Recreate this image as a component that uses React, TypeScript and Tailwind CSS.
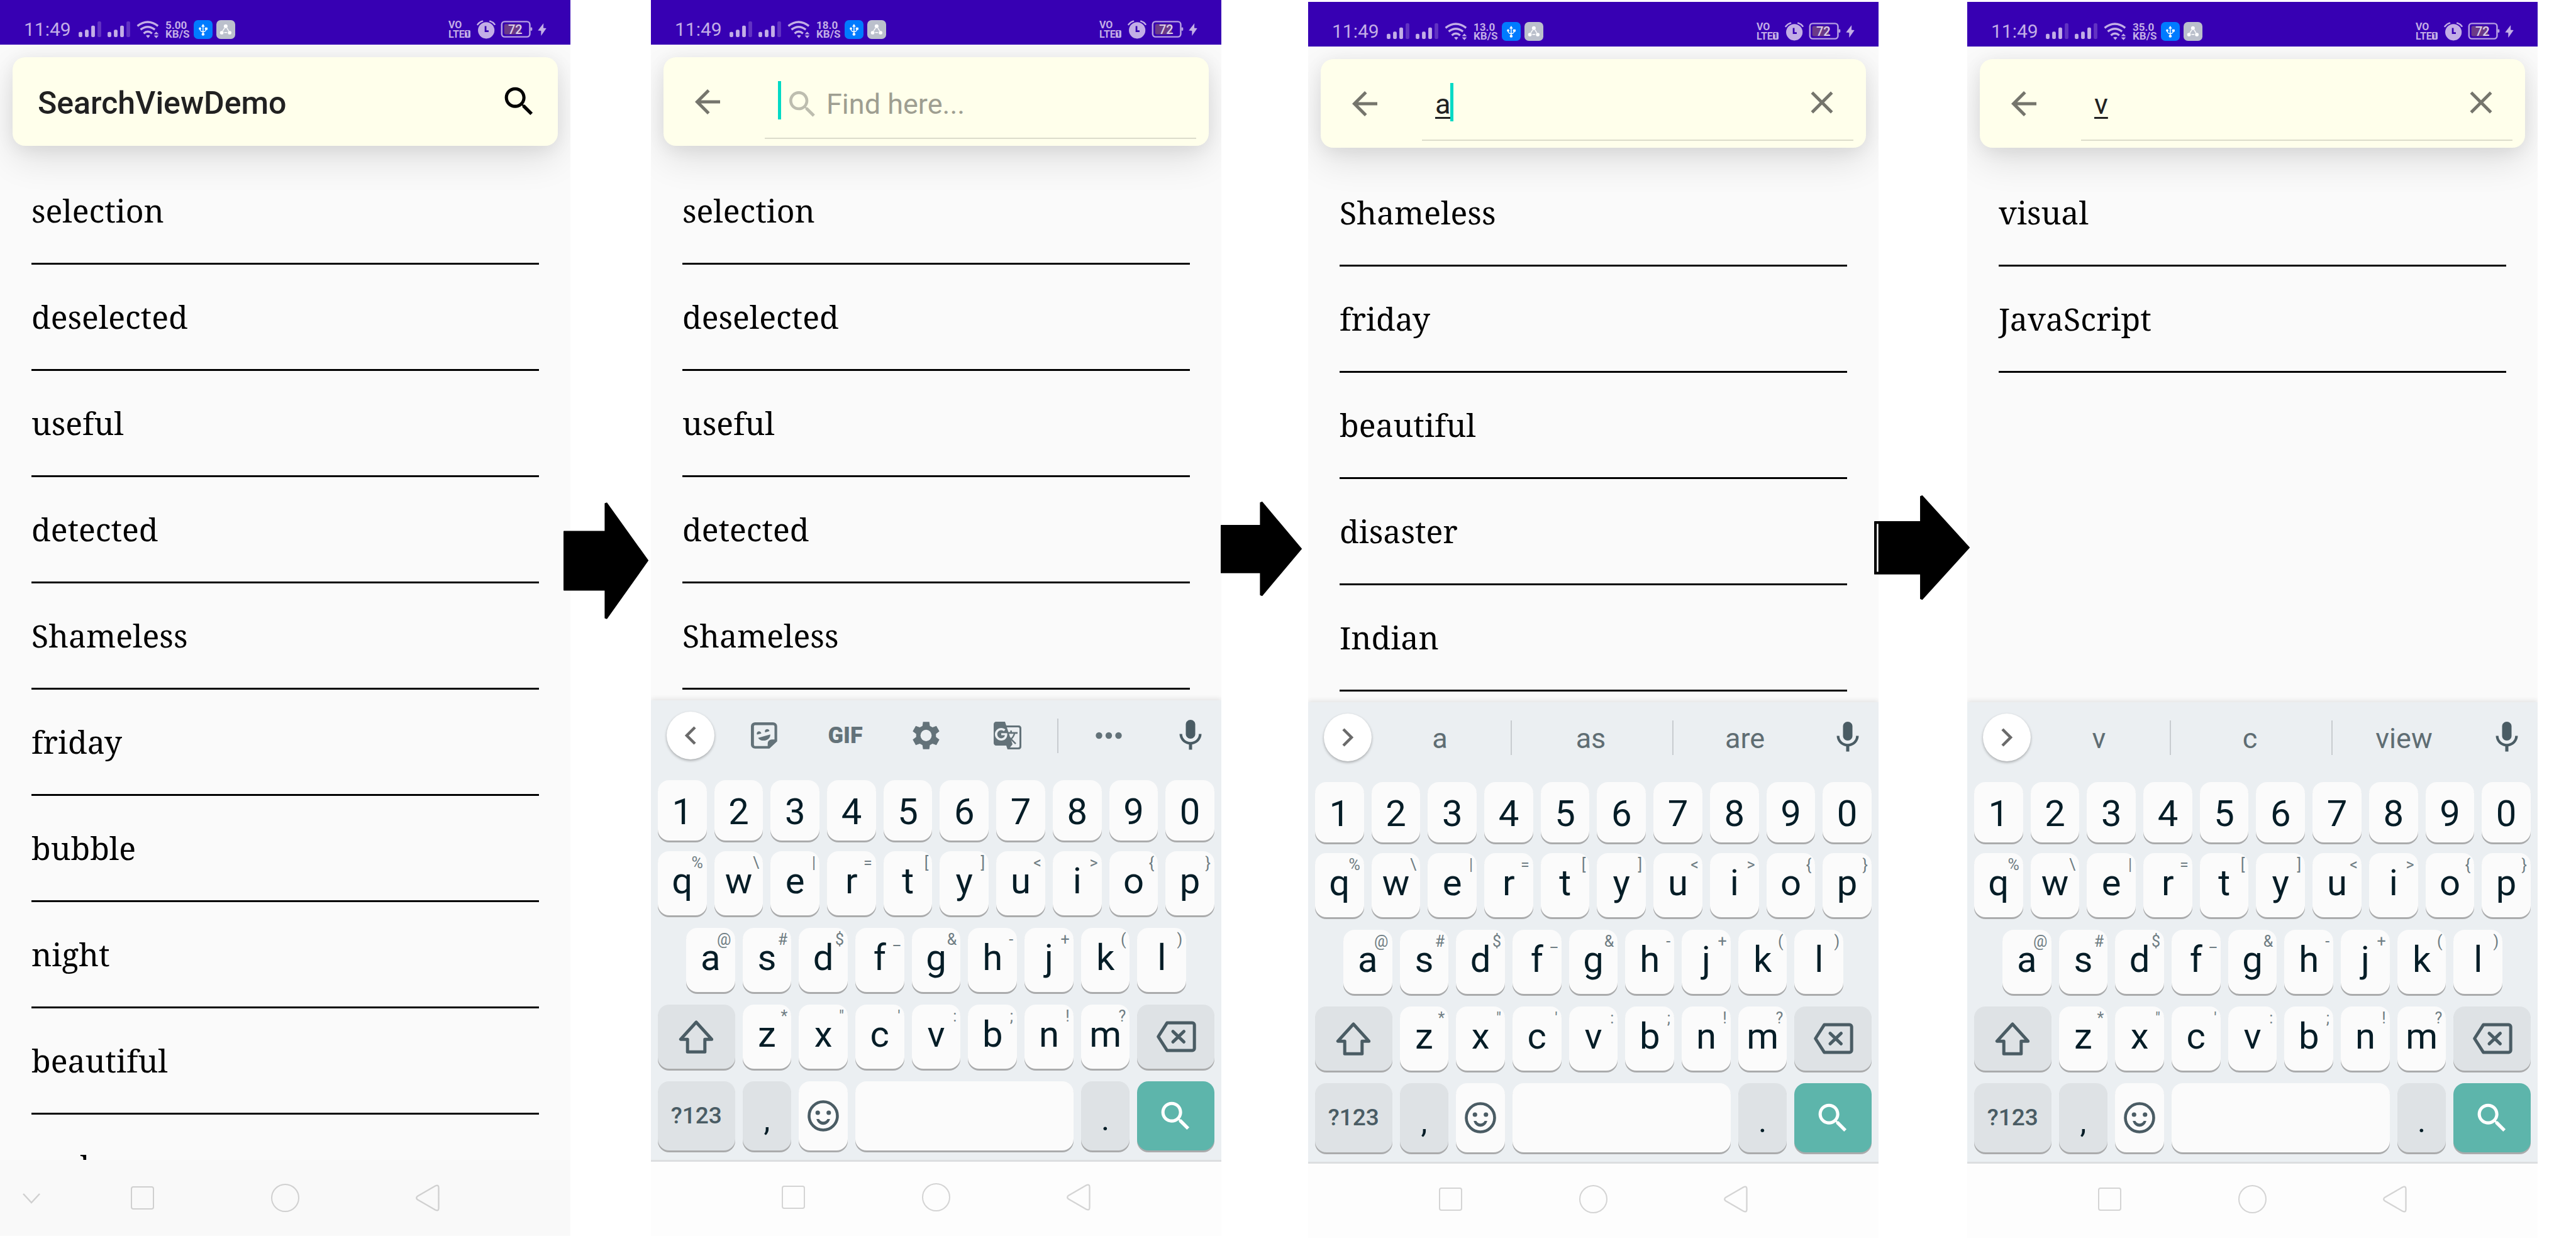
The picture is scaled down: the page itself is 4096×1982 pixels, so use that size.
import type { ReactNode } from "react";
import { MdGTranslate } from "react-icons/md";

/* ---------- icons ---------- */

function SearchIcon({ className }: { className: string }) {
  return (
    <svg viewBox="0 0 24 24" fill="currentColor" className={className} aria-hidden="true">
      <path d="M15.5 14h-.79l-.28-.27C15.41 12.59 16 11.11 16 9.5 16 5.91 13.09 3 9.5 3S3 5.91 3 9.5 5.91 16 9.5 16c1.61 0 3.09-.59 4.23-1.57l.27.28v.79l5 4.99L20.49 19l-4.99-5zm-6 0C7.01 14 5 11.99 5 9.5S7.01 5 9.5 5 14 7.01 14 9.5 11.99 14 9.5 14z" />
    </svg>
  );
}

function BackIcon() {
  return (
    <svg viewBox="0 0 24 24" fill="currentColor" className="size-[60px]" aria-hidden="true">
      <path d="M20 11H7.83l5.59-5.59L12 4l-8 8 8 8 1.41-1.41L7.83 13H20v-2z" />
    </svg>
  );
}

function CloseIcon() {
  return (
    <svg viewBox="0 0 24 24" fill="currentColor" className="size-[60px]" aria-hidden="true">
      <path d="M19 6.41L17.59 5 12 10.59 6.41 5 5 6.41 10.59 12 5 17.59 6.41 19 12 13.41 17.59 19 19 17.59 13.41 12z" />
    </svg>
  );
}

function MicIcon() {
  return (
    <svg viewBox="0 0 24 24" fill="currentColor" className="size-[60px]" aria-hidden="true">
      <path d="M12 14c1.66 0 3-1.34 3-3V5c0-1.66-1.34-3-3-3S9 3.34 9 5v6c0 1.66 1.34 3 3 3z" />
      <path d="M17.3 11c0 3-2.54 5.1-5.3 5.1S6.7 14 6.7 11H5c0 3.41 2.72 6.23 6 6.72V21h2v-3.28c3.28-.48 6-3.3 6-6.72h-1.7z" />
    </svg>
  );
}

function StickerIcon() {
  return (
    <svg viewBox="59 66 140 150" preserveAspectRatio="none" fill="currentColor" className="h-[42px] w-[42px]" aria-hidden="true">
      <path
        fillRule="evenodd"
        d="M81 66H176A22 22 0 0 1 198 88V174L157 215H81A22 22 0 0 1 59 193V88A22 22 0 0 1 81 66ZM83 82H177A7 7 0 0 1 184 89V163H170A22 22 0 0 0 148 185V201H83A7 7 0 0 1 75 194V89A7 7 0 0 1 83 82Z"
      />
      <path d="M92 136A12 12 0 1 1 114 129Z" />
      <path d="M135 123A12 12 0 1 1 157 116Z" />
      <path d="M97 154L162 135C162 160 142 170 127 170C112 170 102 163 97 154Z" />
    </svg>
  );
}

function GearIcon() {
  return (
    <svg viewBox="917 68 142 156" preserveAspectRatio="none" fill="currentColor" className="h-[44px] w-[43px]" aria-hidden="true">
      <path
        fillRule="evenodd"
        d="M972 69H1005L1008 92L1022 100L1042 92L1058 122L1040 137V154L1058 169L1042 200L1022 192L1008 200L1005 223H972L969 200L955 192L934 200L918 169L936 154V137L918 122L934 92L955 100L969 92ZM988 113A29 32 0 1 0 988 178A29 32 0 1 0 988 113Z"
      />
    </svg>
  );
}

function DotsIcon() {
  return (
    <svg viewBox="0 0 42 12" fill="currentColor" className="h-[12px] w-[42px]" aria-hidden="true">
      <circle cx="5.5" cy="6" r="5.2" />
      <circle cx="21" cy="6" r="5.2" />
      <circle cx="36.5" cy="6" r="5.2" />
    </svg>
  );
}

function ChevronIcon({ direction }: { direction: "left" | "right" }) {
  return (
    <svg viewBox="0 0 20 30" fill="none" stroke="currentColor" strokeWidth="4.5" className="h-[30px] w-[20px]" aria-hidden="true">
      <path d={direction === "left" ? "M17 2L4 15L17 28" : "M3 2L16 15L3 28"} />
    </svg>
  );
}

function ShiftIcon() {
  return (
    <svg viewBox="0 0 67 64" fill="none" stroke="currentColor" strokeWidth="6" strokeLinejoin="round" className="h-[54px] w-[56px]" aria-hidden="true">
      <path d="M33.5 4.5L4 37H17V61H50V37H63Z" />
    </svg>
  );
}

function BackspaceIcon() {
  return (
    <svg viewBox="0 0 76 60" fill="none" stroke="currentColor" strokeWidth="6" strokeLinejoin="round" strokeLinecap="round" className="h-[50px] w-[64px]" aria-hidden="true">
      <path d="M21 3.5H69A4 4 0 0 1 73 7.500V52.500A4 4 0 0 1 69 56.500H21L4 30Z" />
      <path d="M32 20L53 40M53 20L32 40" />
    </svg>
  );
}

function SmileyIcon() {
  return (
    <svg viewBox="0 0 60 60" className="size-[50px]" aria-hidden="true">
      <circle cx="30" cy="30" r="27" fill="none" stroke="currentColor" strokeWidth="5.5" />
      <circle cx="19.500" cy="24" r="4.300" fill="currentColor" />
      <circle cx="40.500" cy="24" r="4.300" fill="currentColor" />
      <path fill="currentColor" d="M17 36C19 44 25 47 30 47C35 47 41 44 43 36H38C36 40 33 41 30 41C27 41 24 40 22 36Z" />
    </svg>
  );
}

/* ---------- status bar ---------- */

function SignalIcon() {
  return (
    <svg viewBox="0 0 43 30" className="h-[25px] w-[36px]" aria-hidden="true">
      <rect x="0" y="20" width="7" height="10" rx="2.500" fill="#c3aee6" />
      <rect x="12" y="16" width="7" height="14" rx="2.500" fill="#c3aee6" />
      <rect x="24" y="8" width="7" height="22" rx="2.500" fill="#c3aee6" />
      <rect x="36" y="0" width="7" height="30" rx="2.500" fill="#6233c2" />
    </svg>
  );
}

function WifiIcon() {
  return (
    <svg viewBox="687 41 127 101" className="h-[28px] w-[36px]" fill="none" stroke="#c3aee6" strokeWidth="12" aria-hidden="true">
      <path d="M691 71Q750 25 809 71" />
      <path d="M709 92Q750 60 791 92" />
      <path d="M727 114Q750 93 775 114" />
      <path d="M740 127Q752 120 764 127L752 140Z" fill="#c3aee6" stroke="none" />
      <path d="M785 119L799 104L813 119ZM785 126H813L799 141Z" fill="#c3aee6" stroke="none" />
    </svg>
  );
}

function UsbIcon() {
  return (
    <svg viewBox="1011 36 105 105" className="size-[30px]" aria-hidden="true">
      <rect x="1011" y="36" width="105" height="105" rx="24" fill="#007bff" />
      <g fill="none" stroke="#fff" strokeWidth="5">
        <path d="M1063 68V112" />
        <path d="M1046 86C1046 106 1080 106 1080 86" />
      </g>
      <g fill="#fff">
        <path d="M1053 73L1063 57L1073 73Z" />
        <circle cx="1063" cy="115" r="8" />
        <circle cx="1046" cy="83" r="6.500" />
        <rect x="1073" y="77" width="15" height="13" rx="3" />
      </g>
    </svg>
  );
}

function ShareNodesIcon() {
  return (
    <svg viewBox="1140 36 105 105" className="size-[30px]" aria-hidden="true">
      <rect x="1140" y="36" width="105" height="105" rx="24" fill="#bbc0cc" />
      <g stroke="#fff" strokeWidth="5">
        <path d="M1186 80L1175 97M1199 80L1209 97M1184 105H1200" />
      </g>
      <g fill="#fff">
        <circle cx="1192" cy="70" r="10.500" />
        <circle cx="1170" cy="106" r="10" />
        <circle cx="1214" cy="106" r="10" />
      </g>
    </svg>
  );
}

function AlarmIcon() {
  return (
    <svg viewBox="224 32 109 110" className="size-[30px]" fill="none" aria-hidden="true">
      <circle cx="279" cy="92" r="48" fill="#c3aee6" />
      <path d="M275 67V97H293" stroke="#3700b3" strokeWidth="10" />
      <path d="M229 58Q240 43 257 38M301 38Q318 43 328 57" stroke="#c3aee6" strokeWidth="9" strokeLinecap="round" />
    </svg>
  );
}

function Battery({ level }: { level: string }) {
  return (
    <div className="relative h-[27px] w-[51px]">
      <svg viewBox="359 41 182 98" className="h-full w-full" aria-hidden="true">
        <rect x="364" y="46" width="162" height="88" rx="17" fill="none" stroke="#b69fe2" strokeWidth="9" />
        <rect x="378" y="60" width="96" height="60" rx="9" fill="#6b3a87" />
        <rect x="529" y="79" width="11" height="20" rx="5" fill="#b69fe2" />
      </svg>
      <span className="absolute inset-y-0 left-[12px] flex items-center text-[20px] leading-none font-medium text-[#dccfe8]">{level}</span>
    </div>
  );
}

function BoltIcon() {
  return (
    <svg viewBox="566 56 50 71" className="h-[20px] w-[14px]" fill="#c3aee6" aria-hidden="true">
      <path d="M599 56L567 97L585 99L585 127L615 84L598 83Z" />
    </svg>
  );
}

function StatusBar({ speed }: { speed: string }) {
  return (
    <div className="relative z-10 flex h-[71px] items-center justify-between bg-[#3700b3] px-[38px] pt-[22px] text-[#c3aee6]">
      <div className="flex items-center gap-[10px]">
        <span className="w-[77px] text-[30px] leading-none">11:49</span>
        <SignalIcon />
        <SignalIcon />
        <WifiIcon />
        <span className="w-[35px] text-[17px] leading-[14px] font-bold">
          {speed}
          <br />
          KB/S
        </span>
        <div className="flex gap-[6px]">
          <UsbIcon />
          <ShareNodesIcon />
        </div>
      </div>
      <div className="flex items-center gap-[8px]">
        <div className="w-[37px] text-[16px] leading-[15px] font-bold">
          <div>VO</div>
          <div className="flex items-center">
            LTE
            <span className="rounded-[2px] bg-[#c3aee6] px-[1px] text-[12px] leading-[12px] text-[#3700b3]">1</span>
          </div>
        </div>
        <AlarmIcon />
        <Battery level="72" />
        <BoltIcon />
      </div>
    </div>
  );
}

/* ---------- search cards ---------- */

function Card({ children }: { children: ReactNode }) {
  return (
    <header className="mx-5 mt-5 flex h-[141px] items-center rounded-[20px] bg-[#ffffeb] shadow-[0_22px_56px_rgba(0,0,0,0.11),0_4px_28px_rgba(0,0,0,0.07)]">
      {children}
    </header>
  );
}

function TitleCard() {
  return (
    <Card>
      <h1 className="flex-1 pt-1 pl-[40px] text-[50px] leading-none font-medium text-[#212121]">SearchViewDemo</h1>
      <button aria-label="Search" className="mr-[31px] text-black">
        <SearchIcon className="size-[61px]" />
      </button>
    </Card>
  );
}

function Caret() {
  return <span className="mb-[14px] h-[61px] w-[5px] shrink-0 bg-[#03dac5]" />;
}

function SearchCard({ query, focused }: { query: string; focused: boolean }) {
  return (
    <Card>
      <button aria-label="Back" className="ml-[40px] text-[#75756c]">
        <BackIcon />
      </button>
      <div className="mr-5 mb-[11px] ml-[61px] flex h-[130px] flex-1 items-center border-b-2 border-[#dcdccb] pl-[21px]">
        {query === "" ? (
          <label className="flex flex-1 items-center pt-[22px] text-[#bdbdaf]">
            <Caret />
            <SearchIcon className="ml-[6px] size-[56px]" />
            <input
              aria-label="Find here"
              placeholder="Find here..."
              className="ml-[10px] min-w-0 flex-1 bg-transparent text-[45px] leading-[56px] outline-none placeholder:text-[#9e9e91]"
            />
          </label>
        ) : (
          <>
            <div className="flex flex-1 items-center pt-[22px]">
              <input
                aria-label="Find here"
                defaultValue={query}
                className="field-sizing-content h-[56px] bg-transparent pb-2 text-[45px] leading-[48px] text-[#212121] underline decoration-[3px] underline-offset-[5px] outline-none"
              />
              {focused && <Caret />}
            </div>
            <button aria-label="Clear" className="mt-[10px] mr-5 text-[#75756c]">
              <CloseIcon />
            </button>
          </>
        )}
      </div>
    </Card>
  );
}

/* ---------- word list ---------- */

function WordList({ words }: { words: string[] }) {
  return (
    <ul className="relative mx-[50px] mt-5">
      {words.map((word) => (
        <li
          key={word}
          className="h-[169px] border-b-3 border-black pt-[51px] font-['Noto_Serif','DejaVu_Serif_Condensed',serif] text-[50px] leading-[64px] text-black"
        >
          {word}
        </li>
      ))}
    </ul>
  );
}

/* ---------- keyboard ---------- */

function Key({ label, hint, digit }: { label: string; hint?: string; digit?: boolean }) {
  return (
    <button
      className={
        digit
          ? "relative col-span-2 flex h-[96px] items-center justify-center rounded-[18px] bg-[#fbfbfb] pt-1 text-[58px] leading-none text-[#051d27] shadow-[0_3px_0_#aaabac]"
          : "relative col-span-2 flex h-[102px] items-center justify-center rounded-[18px] bg-[#fbfbfb] pb-2 text-[58px] leading-none text-[#051d27] shadow-[0_3px_0_#aaabac]"
      }
    >
      {label}
      {hint && <span className="absolute top-[6px] right-[6px] text-[25px] leading-none text-[#6f7d83]">{hint}</span>}
    </button>
  );
}

function KeyRow({ keys, hints, indent }: { keys: string; hints: string; indent?: boolean }) {
  return (
    <>
      {indent && <span />}
      {keys.split("").map((k, i) => (
        <Key key={k} label={k} hint={hints[i]} />
      ))}
      {indent && <span />}
    </>
  );
}

function Suggestions({ words }: { words: string[] }) {
  return (
    <div className="grid flex-1 grid-cols-[223fr_257fr_227fr] items-center text-[45px] text-[#5f6d73]">
      {words.map((w, i) => (
        <button
          key={w}
          className={
            i < 2
              ? "h-[55px] border-r-2 border-[#c8ccd0] pr-1 leading-[58px]"
              : "h-[55px] leading-[58px]"
          }
        >
          {w}
        </button>
      ))}
    </div>
  );
}

function Tools() {
  return (
    <>
      <div className="grid flex-1 grid-cols-4 px-[15px] text-[#637279]">
        <button aria-label="Stickers" className="flex items-center justify-center">
          <StickerIcon />
        </button>
        <button className="flex items-center justify-center text-[36px] leading-none font-black">GIF</button>
        <button aria-label="Settings" className="flex items-center justify-center">
          <GearIcon />
        </button>
        <button aria-label="Translate" className="flex items-center justify-center">
          <MdGTranslate className="size-[48px]" />
        </button>
      </div>
      <div className="h-[55px] border-r-2 border-[#c8ccd0]" />
      <button aria-label="More" className="flex w-[160px] justify-center text-[#637279]">
        <DotsIcon />
      </button>
    </>
  );
}

function Keyboard({ suggestions }: { suggestions?: string[] }) {
  return (
    <div className="relative bg-[#ebeff2] pb-[15px] shadow-[0_-2px_8px_rgba(0,0,0,0.10)]">
      <div className="flex h-[127px] items-center pb-[15px] pl-[25px]">
        <button
          aria-label={suggestions ? "Show tools" : "Hide tools"}
          className="flex size-[76px] shrink-0 items-center justify-center rounded-full bg-white text-[#6a6a6a] shadow-[0_2px_4px_rgba(0,0,0,0.3)]"
        >
          <ChevronIcon direction={suggestions ? "right" : "left"} />
        </button>
        {suggestions ? <Suggestions words={suggestions} /> : <Tools />}
        <button aria-label="Voice input" className="flex w-[99px] justify-center text-[#4a5c64]">
          <MicIcon />
        </button>
      </div>

      <div className="mb-[17px] grid grid-cols-20 gap-x-3 px-[11px]">
        {"1234567890".split("").map((d) => (
          <Key key={d} label={d} digit />
        ))}
      </div>
      <div className="grid grid-cols-20 gap-x-3 gap-y-5 px-[11px]">
        <KeyRow keys="qwertyuiop" hints="%\|=[]<>{}" />
        <KeyRow keys="asdfghjkl" hints="@#$_&-+()" indent />
        <button aria-label="Shift" className="col-span-3 flex items-center justify-center rounded-[18px] bg-[#dee2e5] text-[#4a5c64] shadow-[0_3px_0_#aaabac]">
          <ShiftIcon />
        </button>
        <KeyRow keys="zxcvbnm" hints={"*\"':;!?"} />
        <button aria-label="Backspace" className="col-span-3 flex items-center justify-center rounded-[18px] bg-[#dee2e5] text-[#4a5c64] shadow-[0_3px_0_#aaabac]">
          <BackspaceIcon />
        </button>
        <button className="col-span-3 h-[110px] rounded-[18px] bg-[#dee2e5] text-[37px] font-medium text-[#4a5c64] shadow-[0_3px_0_#aaabac]">?123</button>
        <button className="col-span-2 rounded-[18px] bg-[#dee2e5] pt-[12px] text-[50px] text-[#051d27] shadow-[0_3px_0_#aaabac]">,</button>
        <button aria-label="Emoji" className="col-span-2 flex items-center justify-center rounded-[18px] bg-[#fbfbfb] text-[#4a5c64] shadow-[0_3px_0_#aaabac]">
          <SmileyIcon />
        </button>
        <button aria-label="Space" className="col-span-8 rounded-[18px] bg-[#fbfbfb] shadow-[0_3px_0_#aaabac]" />
        <button className="col-span-2 rounded-[18px] bg-[#dee2e5] pt-[12px] text-[50px] text-[#051d27] shadow-[0_3px_0_#aaabac]">.</button>
        <button aria-label="Search" className="col-span-3 flex items-center justify-center rounded-[18px] bg-[#5db5ab] text-white shadow-[0_3px_0_#aaabac]">
          <SearchIcon className="size-[61px]" />
        </button>
      </div>
    </div>
  );
}

/* ---------- navigation bar ---------- */

function NavBar({ collapsible }: { collapsible?: boolean }) {
  return (
    <nav
      className={
        collapsible
          ? "relative flex h-[121px] bg-[#f9f9f9] text-[#d0d0d0]"
          : "relative flex h-[121px] border-t-3 border-[#dcdee0] bg-[#fdfdfd] pb-[5px] text-[#d4d4d4]"
      }
    >
      <div className="flex w-1/8 items-center pl-[36px]">
        {collapsible && (
          <button aria-label="Hide navigation bar">
            <svg viewBox="0 0 28 18" fill="none" stroke="currentColor" strokeWidth="2.500" className="h-[18px] w-[28px]" aria-hidden="true">
              <path d="M1 2L14 16L27 2" />
            </svg>
          </button>
        )}
      </div>
      <div className="grid w-3/4 grid-cols-3">
        <button aria-label="Recent apps" className="flex items-center justify-center">
          <span className="size-[37px] rounded-[4px] border-2 border-current" />
        </button>
        <button aria-label="Home" className="flex items-center justify-center">
          <span className="size-[45px] rounded-full border-2 border-current" />
        </button>
        <button aria-label="Back" className="flex items-center justify-center">
          <svg viewBox="0 0 38 43" fill="none" stroke="currentColor" strokeWidth="2.300" strokeLinejoin="round" className="h-[43px] w-[38px]" aria-hidden="true">
            <path d="M2.500 19L31 2.500Q36.500 0 36.500 5V38Q36.500 43 31 40.500L2.500 24Q0 21.500 2.500 19Z" />
          </svg>
        </button>
      </div>
    </nav>
  );
}

/* ---------- phones ---------- */

function Phone({ speed, children, nav }: { speed: string; children: ReactNode; nav: ReactNode }) {
  return (
    <section className="flex aspect-[907/1966] min-w-0 flex-col overflow-hidden bg-[#fafafa]">
      <StatusBar speed={speed} />
      {children}
      {nav}
    </section>
  );
}

function Screen({ children }: { children: ReactNode }) {
  return <div className="min-h-0 flex-1 overflow-hidden">{children}</div>;
}

const allWords = ["selection", "deselected", "useful", "detected", "Shameless", "friday", "bubble", "night", "beautiful", "rock"];

export default function App() {
  return (
    <main className="min-h-screen bg-white font-[Roboto,sans-serif]">
      <div className="grid grid-cols-[907fr_128fr_907fr_138fr_907fr_141fr_907fr_61fr] items-start">
        <Phone speed="5.00" nav={<NavBar collapsible />}>
          <Screen>
            <TitleCard />
            <WordList words={allWords} />
          </Screen>
        </Phone>

        <div className="z-20 mt-[799px] -ml-[11px] min-w-0">
          <svg viewBox="0 0 161 221" className="h-[186px] w-[135px]" stroke="#000" strokeWidth="2" strokeLinejoin="round" aria-hidden="true">
            <path d="M1 55H79V2L82 1L160 110L82 220L79 219V166H1Z" />
          </svg>
        </div>

        <Phone
          speed="18.0"
          nav={
            <>
              <Keyboard />
              <NavBar />
            </>
          }
        >
          <Screen>
            <SearchCard query="" focused />
            <WordList words={allWords.slice(0, 5)} />
          </Screen>
        </Phone>

        <div className="z-20 mt-[798px] -ml-px min-w-0">
          <svg viewBox="0 0 153 178" preserveAspectRatio="none" className="h-[150px] w-[129px]" stroke="#000" strokeWidth="2" strokeLinejoin="round" aria-hidden="true">
            <path d="M1 45H75V2L78 1L152 89L78 177L75 176V134H1Z" />
          </svg>
        </div>

        <div className="min-w-0 pt-[3px]">
          <Phone
            speed="13.0"
            nav={
              <>
                <Keyboard suggestions={["a", "as", "are"]} />
                <NavBar />
              </>
            }
          >
            <Screen>
              <SearchCard query="a" focused />
              <WordList words={["Shameless", "friday", "beautiful", "disaster", "Indian"]} />
            </Screen>
          </Phone>
        </div>

        <div className="z-20 mt-[788px] -ml-[7px] min-w-0">
          <svg viewBox="0 0 181 198" preserveAspectRatio="none" className="h-[166px] w-[152px]" stroke="#000" strokeWidth="2" strokeLinejoin="round" aria-hidden="true">
            <path d="M1 50H88V2L91 1L180 99L91 197L88 196V149H1Z" />
            <rect x="5" y="54" width="3" height="91" fill="#fff" stroke="none" />
          </svg>
        </div>

        <div className="min-w-0 pt-[3px]">
          <Phone
            speed="35.0"
            nav={
              <>
                <Keyboard suggestions={["v", "c", "view"]} />
                <NavBar />
              </>
            }
          >
            <Screen>
              <SearchCard query="v" focused={false} />
              <WordList words={["visual", "JavaScript"]} />
            </Screen>
          </Phone>
        </div>
      </div>
    </main>
  );
}
